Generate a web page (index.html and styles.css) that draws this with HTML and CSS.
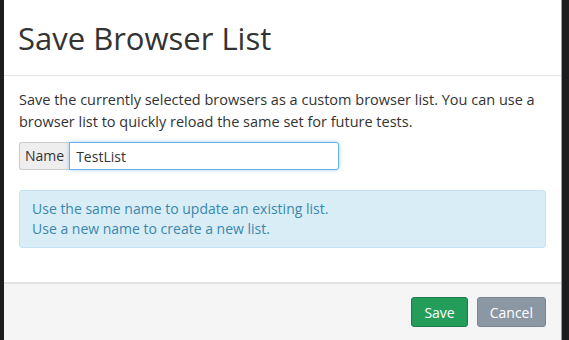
FILE: index.html
```html
<!DOCTYPE html>
<html lang="en">
<head>
    <meta charset="UTF-8">
    <meta name="viewport" content="width=device-width, initial-scale=1.0">
    <title>Save Browser List</title>
    <link rel="stylesheet" href="styles.css">
</head>
<body>
    <div class="modal">
        <div class="modal-header">
            <h2>Save Browser List</h2>
        </div>

        <div class="modal-body">
            <p>Save the currently selected browsers as a custom browser list. You can use a browser list to quickly reload the same set for future tests.</p>

            <div class="input-group">
                <span class="addon">Name</span>
                <input type="text" id="name" value="TestList" />
            </div>

            <div class="alert">
                Use the same name to update an existing list.<br>
                Use a new name to create a new list.
            </div>
        </div>

        <div class="modal-footer">
            <button class="btn btn-save">Save</button>
            <button class="btn btn-cancel">Cancel</button>
        </div>
    </div>
</body>
</html>
```

FILE: styles.css
```css
html, body {
    height: 100%;
}
body {
    font-family: "Open Sans", Arial, sans-serif;
    font-size: 14px;
    color: #333;
    background-color: #1b1d1f;
    margin: 0;
    padding: 0 7px 0 4px;
}
.modal {
    background: #fff;
    height: 100%;
    display: flex;
    flex-direction: column;
    border-right: 1px solid #999;
}
.modal-header {
    padding: 16px 15px 0 14px;
    height: 59px;
    border-bottom: 1px solid #e5e5e5;
}
.modal-header h2 {
    margin: 0;
    font-size: 31px;
    font-weight: normal;
    line-height: 44px;
}
.modal-body {
    padding: 13px 15px 0 15px;
    flex: 1;
}
.modal-body p {
    margin: 0 0 9px 0;
    font-size: 14.5px;
    line-height: 22px;
}
.input-group {
    display: flex;
    width: 320px;
    height: 28px;
}
.addon {
    background: #eee;
    border: 1px solid #ccc;
    border-right: none;
    border-radius: 3px 0 0 3px;
    padding: 0 5px;
    line-height: 26px;
}
input {
    flex: 1;
    font-family: inherit;
    font-size: 14px;
    color: #333;
    padding: 0 6px;
    border: 1px solid #66afe9;
    border-radius: 0 3px 3px 0;
    box-shadow: 0 0 4px rgba(102, 175, 233, 0.6);
    outline: none;
}
.alert {
    margin-top: 20px;
    background: #d9edf7;
    border: 1px solid #c4e3f3;
    border-radius: 3px;
    color: #3a87ad;
    padding: 8px 12px;
    line-height: 20px;
}
.modal-footer {
    background: #f5f5f5;
    border-top: 2px solid #e3e3e3;
    height: 56px;
    padding: 0 15px;
    display: flex;
    align-items: center;
    justify-content: flex-end;
    gap: 9px;
}
.btn {
    font-family: inherit;
    font-size: 14px;
    color: white;
    height: 30px;
    padding: 0 12px;
    border-radius: 3px;
    cursor: pointer;
}
.btn-save {
    background: #259d5a;
    border: 1px solid #1b7e46;
}
.btn-cancel {
    background: #8c97a4;
    border: 1px solid #7a8591;
}
```
